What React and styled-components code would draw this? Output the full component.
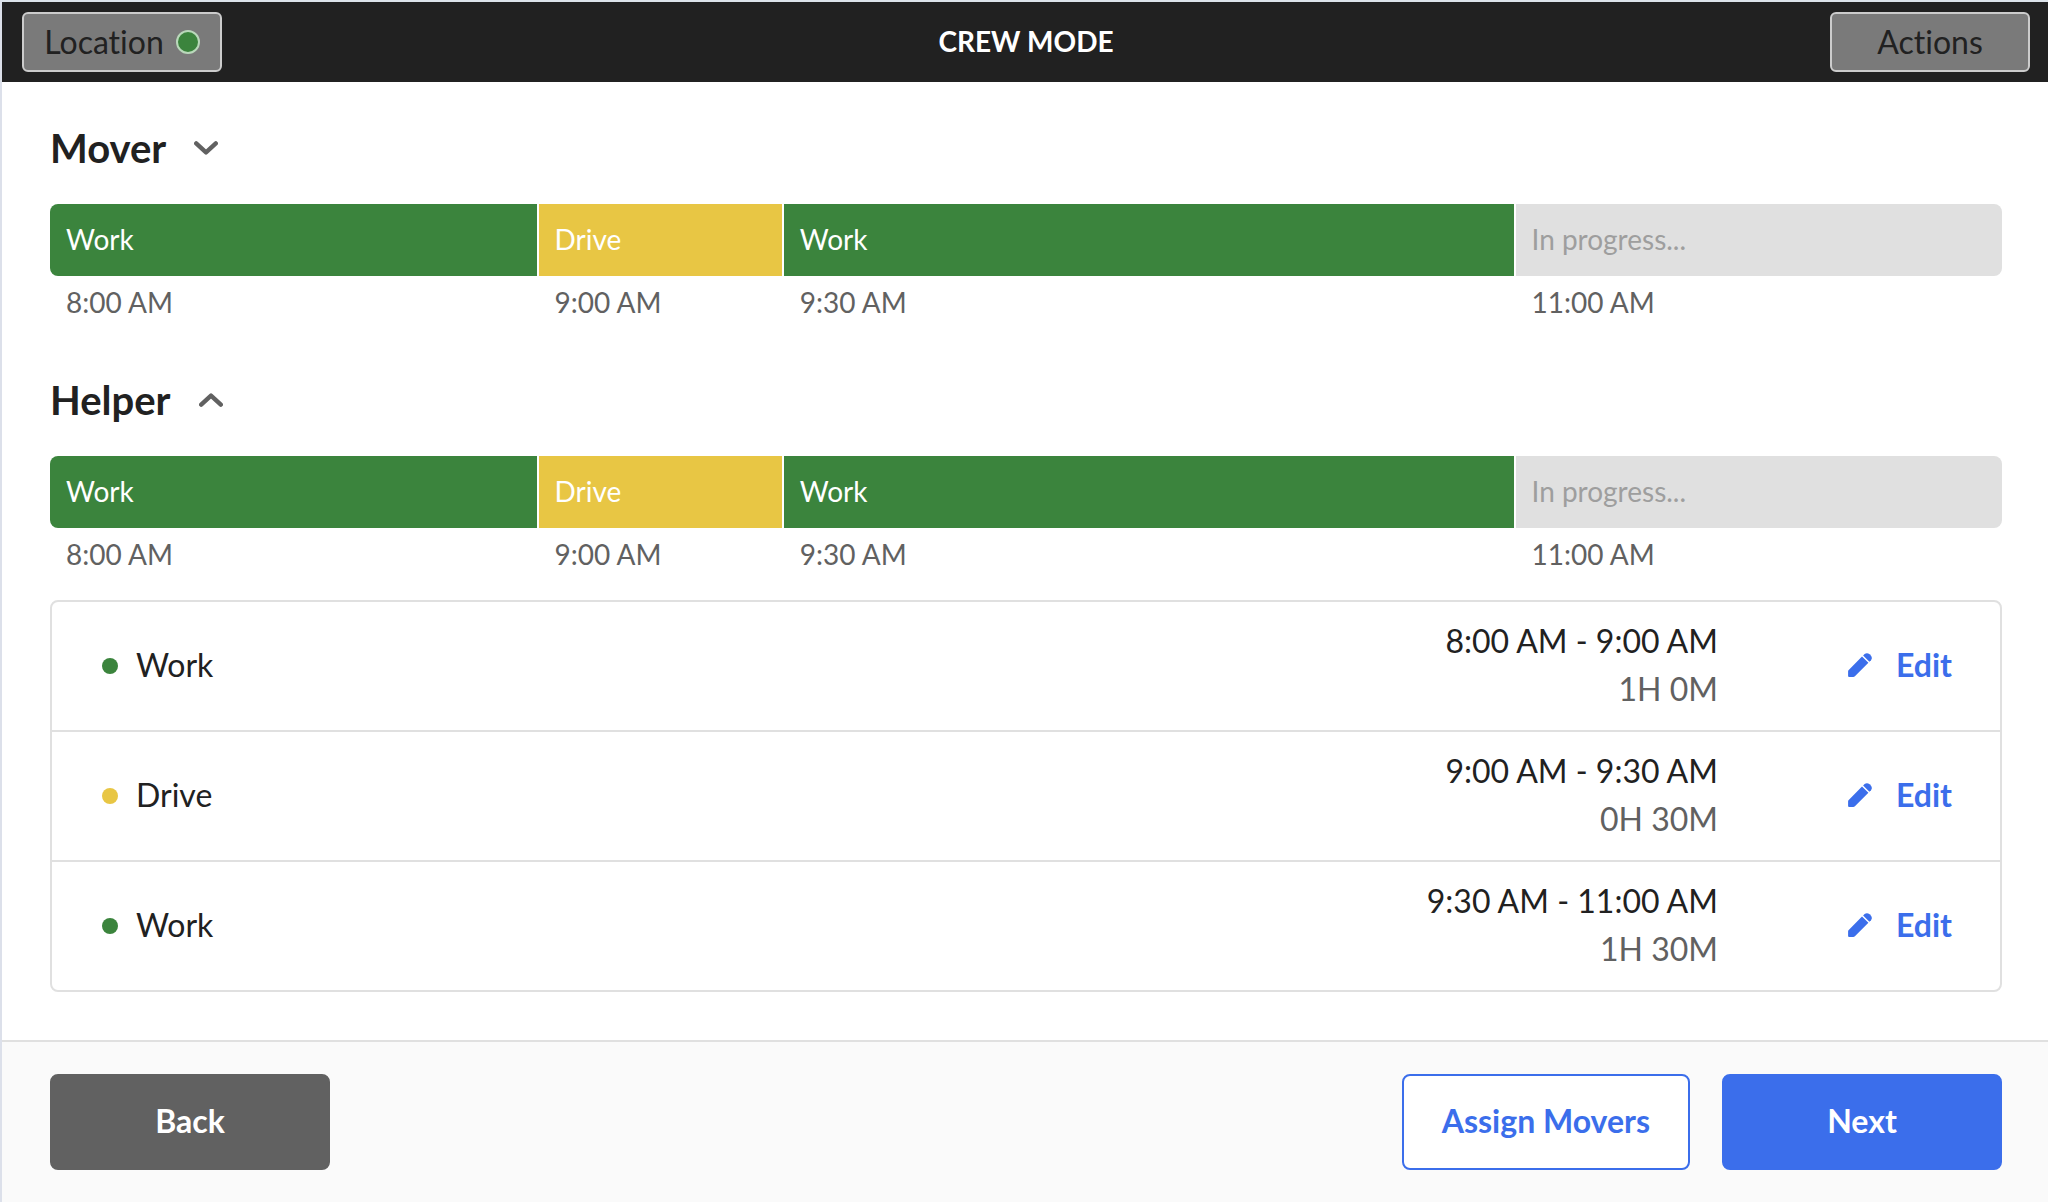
import React, { useState } from "react";
import styled, { createGlobalStyle } from "styled-components";

const COLORS = {
  work: "#3b843d",
  drive: "#e8c644",
  progress: "#e0e0e0",
};

const segments = [
  { id: 1, type: "work", label: "Work", minutes: 60, start: "8:00 AM" },
  { id: 2, type: "drive", label: "Drive", minutes: 30, start: "9:00 AM" },
  { id: 3, type: "work", label: "Work", minutes: 90, start: "9:30 AM" },
  {
    id: 4,
    type: "progress",
    label: "In progress...",
    minutes: 60,
    start: "11:00 AM",
  },
];

const entries = [
  {
    id: 1,
    type: "work",
    label: "Work",
    range: "8:00 AM - 9:00 AM",
    duration: "1H 0M",
  },
  {
    id: 2,
    type: "drive",
    label: "Drive",
    range: "9:00 AM - 9:30 AM",
    duration: "0H 30M",
  },
  {
    id: 3,
    type: "work",
    label: "Work",
    range: "9:30 AM - 11:00 AM",
    duration: "1H 30M",
  },
];

const Timeline = () => (
  <TimelineRow>
    {segments.map((segment) => (
      <Segment key={segment.id} $minutes={segment.minutes}>
        <SegmentBar $type={segment.type}>{segment.label}</SegmentBar>
        <SegmentTime>{segment.start}</SegmentTime>
      </Segment>
    ))}
  </TimelineRow>
);

const TimesheetList = () => (
  <List>
    {entries.map((entry) => (
      <ListItem key={entry.id}>
        <Dot $type={entry.type} />
        <ItemLabel>{entry.label}</ItemLabel>
        <ItemTimes>
          <span>{entry.range}</span>
          <Duration>{entry.duration}</Duration>
        </ItemTimes>
        <EditButton type="button">
          <svg viewBox="0 0 24 24" aria-hidden="true">
            <path d="M0.5 17.3 14 3.6 20.4 9.8 6.9 23.2Q6.2 23.9 5.2 23.9H1.1Q0.1 23.9 0.1 22.9V18.5Q0.1 17.8 0.5 17.3Z" />
            <path d="M15.1 2.5 16.6 1Q19 -0.8 21.6 1.2L22.8 2.4Q24.8 5 23 7.2L21.4 8.7Z" />
          </svg>
          Edit
        </EditButton>
      </ListItem>
    ))}
  </List>
);

const Position = ({ name, defaultOpen = false }) => {
  const [open, setOpen] = useState(defaultOpen);

  return (
    <Section>
      <SectionTitle>
        <ToggleButton
          type="button"
          aria-expanded={open}
          onClick={() => setOpen(!open)}
        >
          {name}
          <Chevron viewBox="0 0 24 16" $open={open} aria-hidden="true">
            <path d="M2.2 3.4 12 12.4 21.8 3.4" />
          </Chevron>
        </ToggleButton>
      </SectionTitle>
      <Timeline />
      {open && <TimesheetList />}
    </Section>
  );
};

const App = () => {
  return (
    <>
      <GlobalStyle />
      <Page>
        <Header>
          <HeaderButton type="button">
            Location
            <StatusDot />
          </HeaderButton>
          <Title>CREW MODE</Title>
          <HeaderButton type="button">Actions</HeaderButton>
        </Header>
        <Content>
          <Position name="Mover" />
          <Position name="Helper" defaultOpen />
        </Content>
        <Footer>
          <FooterButton type="button" $variant="back">
            Back
          </FooterButton>
          <FooterActions>
            <FooterButton type="button" $variant="outline">
              Assign Movers
            </FooterButton>
            <FooterButton type="button" $variant="primary">
              Next
            </FooterButton>
          </FooterActions>
        </Footer>
      </Page>
    </>
  );
};

const GlobalStyle = createGlobalStyle`
  * {
    box-sizing: border-box;
  }
  body {
    margin: 0;
    background: #ffffff;
    color: #212121;
    font-family: Lato, "Open Sans", sans-serif;
    font-size: 32px;
    line-height: 48px;
    font-variant-ligatures: none;
  }
  button {
    font: inherit;
    font-variant-ligatures: none;
    cursor: pointer;
  }
`;

const Page = styled.div`
  display: flex;
  flex-direction: column;
  min-height: 100vh;
  border-top: 2px solid #dce3ea;
  border-left: 2px solid #dce0ea;
`;

const Header = styled.header`
  display: flex;
  align-items: center;
  justify-content: space-between;
  height: 80px;
  padding: 0 18px 0 20px;
  background: #212121;
`;

const HeaderButton = styled.button`
  display: flex;
  align-items: center;
  justify-content: center;
  gap: 12px;
  width: 200px;
  height: 60px;
  padding: 0;
  border: 2px solid #cccccc;
  border-radius: 6px;
  background: #7a7a7a;
  color: #212121;
`;

const StatusDot = styled.span`
  width: 24px;
  height: 24px;
  border: 2px solid #b9d8ba;
  border-radius: 50%;
  background: ${COLORS.work};
`;

const Title = styled.h1`
  margin: 0;
  padding-bottom: 2px;
  color: #ffffff;
  font-size: 28px;
  font-weight: 700;
`;

const Content = styled.main`
  display: flex;
  flex: 1;
  flex-direction: column;
  gap: 48px;
  padding: 42px 46px 48px 48px;
`;

const Section = styled.section`
  display: flex;
  flex-direction: column;
`;

const SectionTitle = styled.h2`
  margin: 0 0 32px;
  font-size: 40px;
  font-weight: 700;
`;

const ToggleButton = styled.button`
  display: flex;
  align-items: center;
  gap: 28px;
  padding: 0;
  border: none;
  background: none;
  color: #212121;
`;

const Chevron = styled.svg`
  width: 24px;
  height: 16px;
  fill: none;
  stroke: #616161;
  stroke-width: 4.4;
  stroke-linecap: round;
  stroke-linejoin: round;
  transform: ${({ $open }) => ($open ? "rotate(180deg)" : "none")};
`;

const TimelineRow = styled.div`
  display: flex;
  gap: 2px;
  border-radius: 8px;
  overflow: hidden;
`;

const Segment = styled.div`
  flex: ${({ $minutes }) => $minutes} 1 0;
  min-width: 0;
  font-size: 28px;

  &:first-child > :first-child {
    border-bottom-left-radius: 8px;
  }
  &:last-child > :first-child {
    border-bottom-right-radius: 8px;
  }
`;

const SegmentBar = styled.div`
  display: flex;
  align-items: center;
  height: 72px;
  padding: 0 16px 2px;
  background: ${({ $type }) => COLORS[$type]};
  color: ${({ $type }) => ($type === "progress" ? "#9e9e9e" : "#ffffff")};
`;

const SegmentTime = styled.div`
  padding: 2px 16px;
  color: #616161;
`;

const List = styled.ul`
  margin: 20px 0 0;
  padding: 0;
  border: 2px solid #e0e0e0;
  border-radius: 8px;
  list-style: none;
`;

const ListItem = styled.li`
  display: flex;
  align-items: center;
  padding: 15px 48px 15px 50px;

  & + & {
    border-top: 2px solid #e0e0e0;
  }
`;

const Dot = styled.span`
  width: 16px;
  height: 16px;
  margin-right: 18px;
  border-radius: 50%;
  background: ${({ $type }) => COLORS[$type]};
`;

const ItemLabel = styled.span`
  flex: 1;
  padding-bottom: 2px;
`;

const ItemTimes = styled.div`
  display: flex;
  flex-direction: column;
  align-items: flex-end;
  padding-bottom: 2px;
`;

const Duration = styled.span`
  color: #616161;
`;

const EditButton = styled.button`
  display: flex;
  align-items: center;
  justify-content: flex-end;
  gap: 24px;
  width: 234px;
  padding: 0 0 2px;
  border: none;
  background: none;
  color: #3b6eeb;
  font-weight: 700;

  svg {
    width: 24px;
    height: 24px;
    fill: #3b6eeb;
  }
`;

const Footer = styled.footer`
  display: flex;
  align-items: center;
  justify-content: space-between;
  padding: 32px 46px 32px 48px;
  border-top: 2px solid #e0e0e0;
  background: #fafafa;
`;

const FooterActions = styled.div`
  display: flex;
  gap: 32px;
`;

const FooterButton = styled.button`
  min-width: 280px;
  height: 96px;
  padding: 0 38px 2px;
  border: 2px solid;
  border-color: ${({ $variant }) =>
    $variant === "back" ? "#616161" : "#3b6eeb"};
  border-radius: 8px;
  background: ${({ $variant }) =>
    ({ back: "#616161", outline: "#ffffff", primary: "#3b6eeb" })[$variant]};
  color: ${({ $variant }) => ($variant === "outline" ? "#3b6eeb" : "#ffffff")};
  font-weight: 700;
`;

export default App;
